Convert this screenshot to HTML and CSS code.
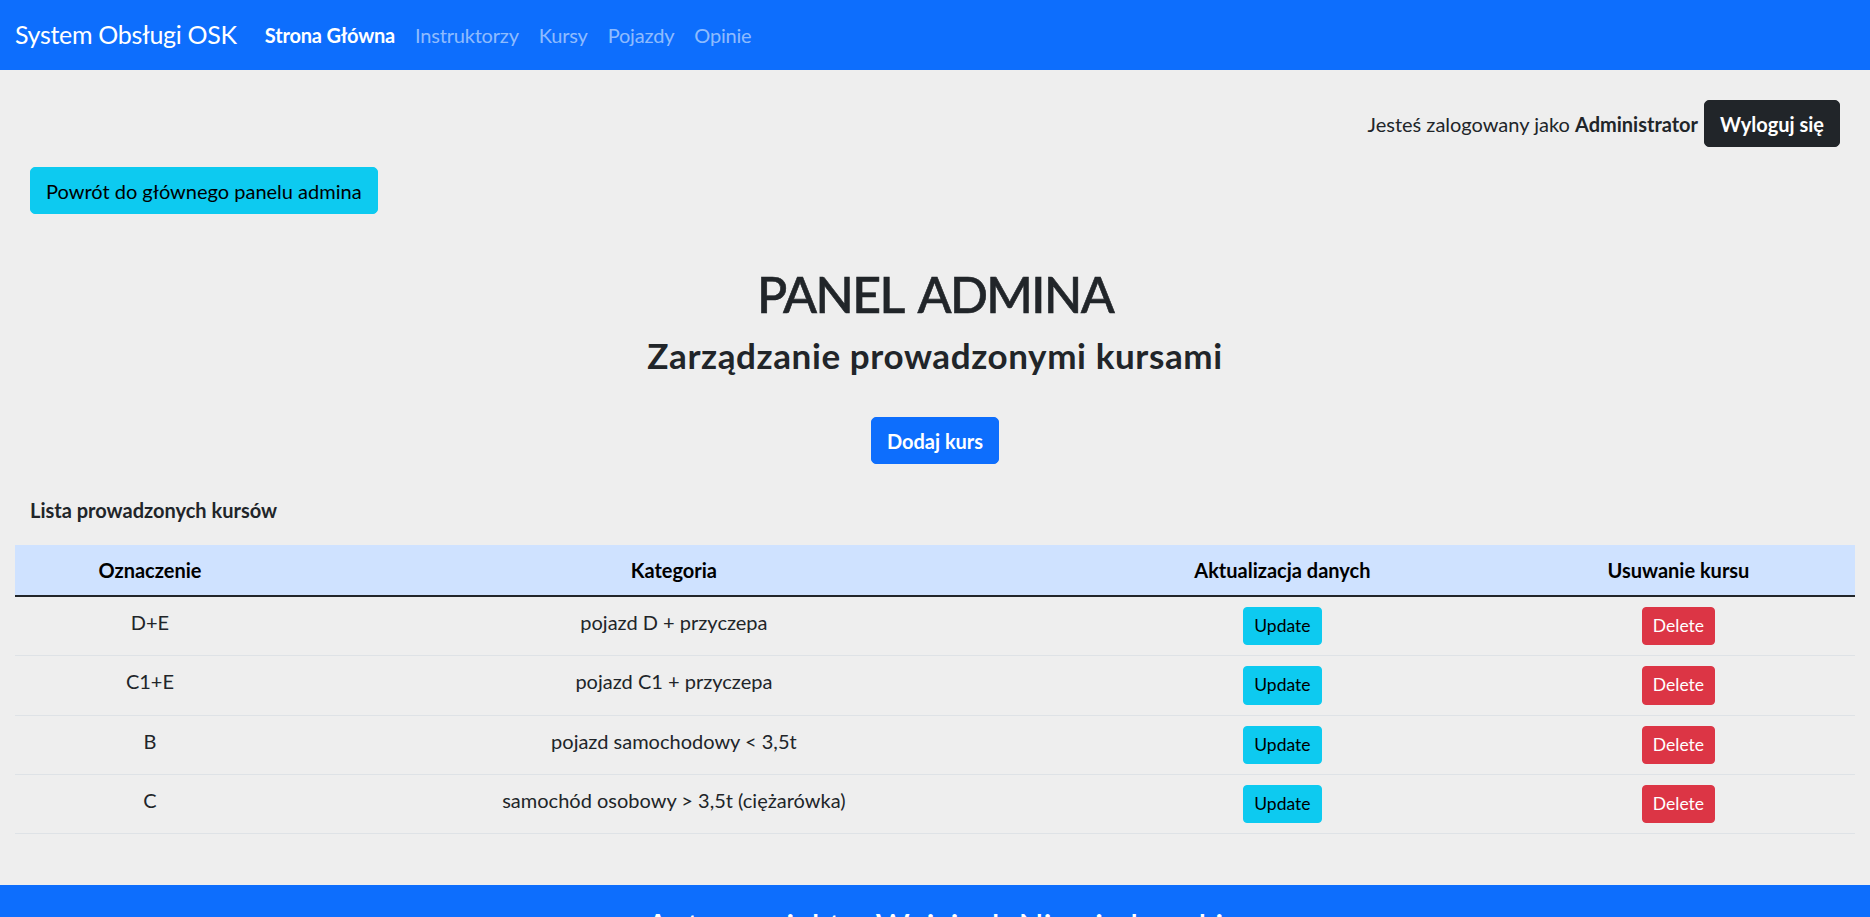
FILE: index.html
```html
<!DOCTYPE html>
<html lang="pl">
<head>
<meta charset="utf-8">
<title>System Obsługi OSK</title>
<link rel="stylesheet" href="styles.css">
</head>
<body>
<nav class="navbar">
  <a class="brand" href="#">System Obsługi OSK</a>
  <ul class="nav">
    <li><a class="nav-link active" href="#">Strona Główna</a></li>
    <li><a class="nav-link" href="#">Instruktorzy</a></li>
    <li><a class="nav-link" href="#">Kursy</a></li>
    <li><a class="nav-link" href="#">Pojazdy</a></li>
    <li><a class="nav-link" href="#">Opinie</a></li>
  </ul>
</nav>

<main class="main">
  <div class="login-row">
    <span class="login-text">Jesteś zalogowany jako <b>Administrator</b></span>
    <a class="btn btn-dark btn-bold" href="#">Wyloguj się</a>
  </div>

  <div class="back-row">
    <a class="btn btn-info" href="#">Powrót do głównego panelu admina</a>
  </div>

  <h1 class="title">PANEL ADMINA</h1>
  <h2 class="subtitle">Zarządzanie prowadzonymi kursami</h2>

  <div class="add-row">
    <a class="btn btn-primary btn-bold" href="#">Dodaj kurs</a>
  </div>

  <p class="list-title">Lista prowadzonych kursów</p>

  <table class="table">
    <colgroup>
      <col class="c1"><col class="c2"><col class="c3"><col class="c4">
    </colgroup>
    <thead>
      <tr>
        <th>Oznaczenie</th>
        <th>Kategoria</th>
        <th>Aktualizacja danych</th>
        <th>Usuwanie kursu</th>
      </tr>
    </thead>
    <tbody>
      <tr>
        <td>D+E</td>
        <td>pojazd D + przyczepa</td>
        <td><a class="btn btn-sm btn-info" href="#">Update</a></td>
        <td><a class="btn btn-sm btn-danger" href="#">Delete</a></td>
      </tr>
      <tr>
        <td>C1+E</td>
        <td>pojazd C1 + przyczepa</td>
        <td><a class="btn btn-sm btn-info" href="#">Update</a></td>
        <td><a class="btn btn-sm btn-danger" href="#">Delete</a></td>
      </tr>
      <tr>
        <td>B</td>
        <td>pojazd samochodowy &lt; 3,5t</td>
        <td><a class="btn btn-sm btn-info" href="#">Update</a></td>
        <td><a class="btn btn-sm btn-danger" href="#">Delete</a></td>
      </tr>
      <tr>
        <td>C</td>
        <td>samochód osobowy &gt; 3,5t (ciężarówka)</td>
        <td><a class="btn btn-sm btn-info" href="#">Update</a></td>
        <td><a class="btn btn-sm btn-danger" href="#">Delete</a></td>
      </tr>
    </tbody>
  </table>
</main>

<footer class="footer">
  <h3 class="footer-text">Autor projektu: Wojciech Niewiadomski</h3>
</footer>
</body>
</html>
```

FILE: styles.css
```css
* { box-sizing: border-box; }

html, body {
  margin: 0;
  padding: 0;
}

body {
  background: #eeeeee;
  color: #212529;
  font-family: Lato, "Open Sans", "DejaVu Sans", sans-serif;
  font-size: 20px;
  line-height: 1.5;
}

a { text-decoration: none; }

/* navbar */
.navbar {
  display: flex;
  align-items: center;
  background: #0d6efd;
  padding: 10px 15px;
  height: 70px;
}

.brand {
  color: #fff;
  font-size: 25px;
  line-height: 37.5px;
  padding: 6.25px 0;
  margin-right: 18px;
  letter-spacing: -0.3px;
}

.nav {
  display: flex;
  list-style: none;
  margin: 0;
  padding: 0;
}

.nav-link {
  display: block;
  padding: 10px 10px;
  color: rgba(255, 255, 255, 0.55);
  font-size: 20px;
  line-height: 30px;
  letter-spacing: -0.2px;
}

.nav-link.active {
  color: #fff;
  font-weight: 700;
}

/* main */
.main {
  padding: 0 15px;
}

.login-row {
  display: flex;
  justify-content: flex-end;
  align-items: baseline;
  gap: 6px;
  padding: 30px 15px 0 0;
}

.login-text b { font-weight: 700; }

.back-row {
  margin-top: 20px;
  padding-left: 15px;
}

.btn {
  display: inline-block;
  font-size: 20px;
  line-height: 30px;
  padding: 7.5px 15px;
  border: 1.25px solid transparent;
  border-radius: 5px;
  text-align: center;
  vertical-align: middle;
}

.btn-bold { font-weight: 700; }

.btn-sm {
  font-size: 17.5px;
  line-height: 26.25px;
  padding: 5px 10px;
  border-radius: 4px;
}

.btn-dark { background: #212529; border-color: #212529; color: #fff; }
.btn-info { background: #0dcaf0; border-color: #0dcaf0; color: #000; }
.btn-primary { background: #0d6efd; border-color: #0d6efd; color: #fff; }
.btn-danger { background: #dc3545; border-color: #dc3545; color: #fff; }

.title {
  margin: 50px 0 10px;
  text-align: center;
  font-size: 50px;
  line-height: 60px;
  font-weight: 500;
  letter-spacing: -1.6px;
  word-spacing: 6px;
  -webkit-text-stroke: 0.6px #212529;
}

.subtitle {
  margin: 0 0 10px;
  text-align: center;
  font-size: 35px;
  line-height: 42px;
  font-weight: 700;
  letter-spacing: 0.6px;
}

.add-row {
  margin-top: 41px;
  text-align: center;
}

.list-title {
  margin: 31px 0 20px;
  padding-left: 15px;
  font-weight: 700;
  font-size: 20px;
  line-height: 30px;
}

/* table */
.table {
  width: 100%;
  border-collapse: collapse;
  table-layout: fixed;
  color: #212529;
}

.c1 { width: 14.67%; }
.c2 { width: 42.28%; }
.c3 { width: 23.86%; }
.c4 { width: 19.19%; }

.table th,
.table td {
  padding: 10px;
  text-align: center;
  vertical-align: top;
  line-height: 30px;
  border-bottom: 1px solid #dee2e6;
}

.table thead th {
  background: #cfe2ff;
  color: #000;
  font-weight: 700;
  border-bottom: 2px solid #212529;
}

.table td .btn { vertical-align: top; }

/* footer */
.footer {
  margin-top: 51px;
  background: #0d6efd;
  padding: 20px 15px;
  text-align: center;
}

.footer-text {
  margin: 0;
  color: #fff;
  font-size: 33px;
  line-height: 40px;
  font-weight: 500;
}
```
